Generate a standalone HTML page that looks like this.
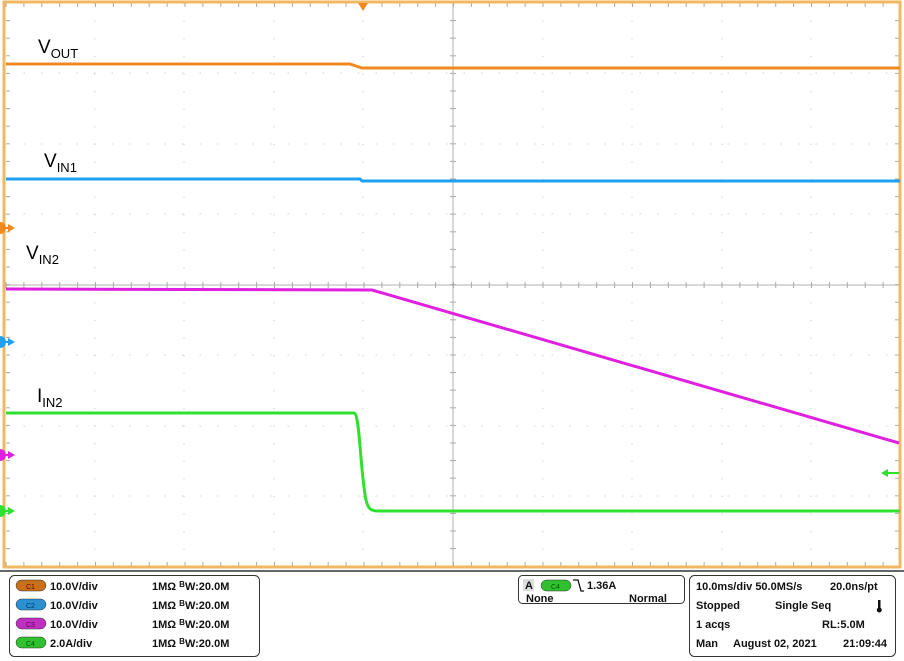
<!DOCTYPE html>
<html><head><style>
body{margin:0;background:#fff;width:904px;height:661px;overflow:hidden;font-family:"Liberation Sans",sans-serif;}
svg{position:absolute;left:0;top:0}
.b{font-weight:bold;font-size:11px;fill:#111}
.l{font-size:19px;fill:#000}
.s{font-size:13px}
</style></head><body>
<svg width="904" height="661" viewBox="0 0 904 661">
<rect x="0" y="0" width="904" height="661" fill="#fff"/>
<g stroke="#c8c8c8" stroke-width="1" stroke-dasharray="1.2 16.4">
<line x1="95" y1="3" x2="95" y2="567"/><line x1="184" y1="3" x2="184" y2="567"/><line x1="274" y1="3" x2="274" y2="567"/><line x1="363" y1="3" x2="363" y2="567"/>
<line x1="543" y1="3" x2="543" y2="567"/><line x1="632" y1="3" x2="632" y2="567"/><line x1="722" y1="3" x2="722" y2="567"/><line x1="811" y1="3" x2="811" y2="567"/>
<line x1="6" y1="73" x2="900" y2="73"/><line x1="6" y1="144" x2="900" y2="144"/><line x1="6" y1="214" x2="900" y2="214"/>
<line x1="6" y1="355" x2="900" y2="355"/><line x1="6" y1="426" x2="900" y2="426"/><line x1="6" y1="496" x2="900" y2="496"/>
</g>
<line x1="453" y1="3" x2="453" y2="567" stroke="#b0b0b0" stroke-width="1"/>
<line x1="6" y1="285" x2="900" y2="285" stroke="#b0b0b0" stroke-width="1"/>
<g stroke="#aaa" stroke-width="1" id="tk"></g>
<rect x="4" y="2" width="896" height="565" fill="none" stroke="#f0b860" stroke-width="3"/>
<line x1="0" y1="571" x2="904" y2="571" stroke="#333" stroke-width="1.5"/>
<polyline points="6,64 350,64 362,68 900,68" fill="none" stroke="#f08a20" stroke-width="3"/>
<polyline points="6,179 360,179 362,181 900,181" fill="none" stroke="#20a0f0" stroke-width="3"/>
<polyline points="6,289 372,290 899,443" fill="none" stroke="#e020e0" stroke-width="3"/>
<path d="M6,413 L354,413 C360,414 360,470 366,500 C368,508 370,511 378,511 L900,511" fill="none" stroke="#30e030" stroke-width="3"/>
<polygon points="358,3 368,3 363,11" fill="#f08a20"/>
<circle cx="0" cy="228" r="6" fill="#f08a20"/><polygon points="8,224 15,228 8,232" fill="#f08a20"/><line x1="4" y1="228" x2="10" y2="228" stroke="#f08a20" stroke-width="2"/>
<circle cx="0" cy="342" r="6" fill="#20a0f0"/><polygon points="8,338 15,342 8,346" fill="#20a0f0"/><line x1="4" y1="342" x2="10" y2="342" stroke="#20a0f0" stroke-width="2"/>
<circle cx="0" cy="455" r="6" fill="#e020e0"/><polygon points="8,451 15,455 8,459" fill="#e020e0"/><line x1="4" y1="455" x2="10" y2="455" stroke="#e020e0" stroke-width="2"/>
<circle cx="0" cy="511" r="6" fill="#30e030"/><polygon points="8,507 15,511 8,515" fill="#30e030"/><line x1="4" y1="511" x2="10" y2="511" stroke="#30e030" stroke-width="2"/>
<polygon points="881,473 888,469 888,477" fill="#30e030"/><line x1="886" y1="473" x2="899" y2="473" stroke="#30e030" stroke-width="2"/>
<text class="l" x="38" y="53">V<tspan class="s" dy="5">OUT</tspan></text>
<text class="l" x="44" y="167">V<tspan class="s" dy="5">IN1</tspan></text>
<text class="l" x="26" y="259">V<tspan class="s" dy="5">IN2</tspan></text>
<text class="l" x="37" y="402">I<tspan class="s" dy="5">IN2</tspan></text>
<rect x="9.5" y="575.5" width="250" height="81" rx="5" fill="#fff" stroke="#333"/>
<g>
<rect x="16" y="580" width="30" height="11" rx="5.5" fill="#c8701a" stroke="#333" stroke-width=".5"/><text x="26" y="589" font-size="7" fill="#600">C1</text>
<rect x="16" y="599" width="30" height="11" rx="5.5" fill="#2a90d0" stroke="#333" stroke-width=".5"/><text x="26" y="608" font-size="7" fill="#036">C2</text>
<rect x="16" y="618" width="30" height="11" rx="5.5" fill="#c030c0" stroke="#333" stroke-width=".5"/><text x="26" y="627" font-size="7" fill="#505">C3</text>
<rect x="16" y="637" width="30" height="11" rx="5.5" fill="#30c030" stroke="#333" stroke-width=".5"/><text x="26" y="646" font-size="7" fill="#050">C4</text>
</g>
<text class="b" x="50" y="590">10.0V/div</text><text class="b" x="152" y="590">1MΩ <tspan font-size="8" dy="-3">B</tspan><tspan dy="3">W:20.0M</tspan></text>
<text class="b" x="50" y="609">10.0V/div</text><text class="b" x="152" y="609">1MΩ <tspan font-size="8" dy="-3">B</tspan><tspan dy="3">W:20.0M</tspan></text>
<text class="b" x="50" y="628">10.0V/div</text><text class="b" x="152" y="628">1MΩ <tspan font-size="8" dy="-3">B</tspan><tspan dy="3">W:20.0M</tspan></text>
<text class="b" x="50" y="647">2.0A/div</text><text class="b" x="152" y="647">1MΩ <tspan font-size="8" dy="-3">B</tspan><tspan dy="3">W:20.0M</tspan></text>
<rect x="518.5" y="575.5" width="166" height="28" rx="4" fill="#fff" stroke="#333"/>
<rect x="523" y="579" width="11" height="12" fill="#ddd"/><text class="b" x="525" y="589">A</text>
<rect x="541" y="580" width="30" height="11" rx="5.5" fill="#30c030" stroke="#333" stroke-width=".5"/><text x="551" y="589" font-size="7" fill="#050">C4</text>
<path d="M573,580 L578,580 L581,591 L584,591" fill="none" stroke="#111" stroke-width="1.3"/>
<text class="b" x="587" y="589">1.36A</text>
<text class="b" x="526" y="602">None</text><text class="b" x="629" y="602">Normal</text>
<rect x="689.5" y="575.5" width="206" height="81" rx="5" fill="#fff" stroke="#333"/>
<text class="b" x="696" y="590">10.0ms/div 50.0MS/s</text><text class="b" x="830" y="590">20.0ns/pt</text>
<text class="b" x="696" y="609">Stopped</text><text class="b" x="775" y="609">Single Seq</text>
<rect x="878" y="600" width="2.5" height="9" fill="#111"/><circle cx="879.3" cy="610" r="2.5" fill="#111"/>
<text class="b" x="696" y="628">1 acqs</text><text class="b" x="822" y="628">RL:5.0M</text>
<text class="b" x="696" y="647">Man</text><text class="b" x="733" y="647">August 02, 2021</text><text class="b" x="843" y="647">21:09:44</text>
</svg>
<script>
var g=document.getElementById('tk'),s='';
for(var x=6;x<=900;x+=17.9){s+='<line x1="'+x+'" y1="3" x2="'+x+'" y2="7"/><line x1="'+x+'" y1="562" x2="'+x+'" y2="567"/><line x1="'+x+'" y1="282" x2="'+x+'" y2="288"/>';}
for(var y=3;y<=567;y+=17.6){s+='<line x1="6" y1="'+y+'" x2="10" y2="'+y+'"/><line x1="895" y1="'+y+'" x2="900" y2="'+y+'"/><line x1="450" y1="'+y+'" x2="456" y2="'+y+'"/>';}
g.innerHTML=s;
</script>
</body></html>
